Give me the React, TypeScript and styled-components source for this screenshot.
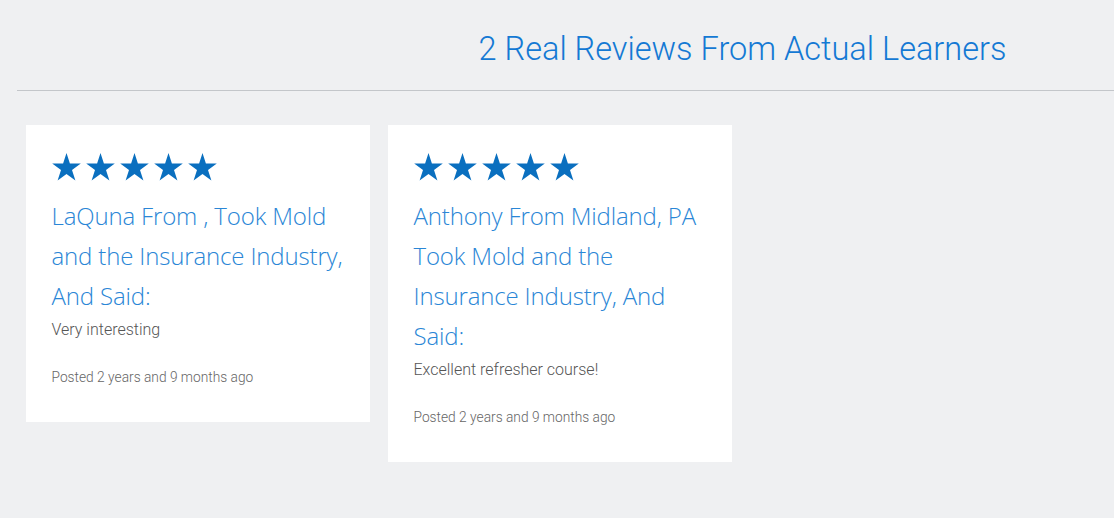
import React from 'react';
import styled, { createGlobalStyle } from 'styled-components';

const GlobalStyle = createGlobalStyle`
  html, body {
    margin: 0;
    padding: 0;
    background: #eff0f2;
    overflow: hidden;
  }
  body {
    font-family: Roboto, "Liberation Sans", sans-serif;
  }
`;

type Review = {
  name: string;
  city: string;
  state: string;
  course: string;
  body: string;
  posted: string;
};

const REVIEWS: Review[] = [
  {
    name: 'LaQuna',
    city: '',
    state: '',
    course: 'Mold and the Insurance Industry',
    body: 'Very interesting',
    posted: '2 years and 9 months ago',
  },
  {
    name: 'Anthony',
    city: 'Midland',
    state: 'PA',
    course: 'Mold and the Insurance Industry',
    body: 'Excellent refresher course!',
    posted: '2 years and 9 months ago',
  },
];

const Star: React.FC = () => (
  <svg width="29" height="28" viewBox="0 0 29 28" aria-hidden="true">
    <polygon
      fill="#0a6fbf"
      points="14.5,0 17.9,10.4 28.8,10.4 20,16.9 23.4,27.5 14.5,21 5.6,27.5 9,16.9 0.2,10.4 11.1,10.4"
    />
  </svg>
);

const ReviewCard: React.FC<{ review: Review }> = ({ review }) => (
  <Card>
    <Stars>
      {[0, 1, 2, 3, 4].map((i) => (
        <Star key={i} />
      ))}
    </Stars>
    <Author>
      {review.name} From {review.city}, {review.state} Took {review.course}, And Said:
    </Author>
    <Body>{review.body}</Body>
    <Posted>Posted {review.posted}</Posted>
  </Card>
);

export const App: React.FC = () => (
  <>
    <GlobalStyle />
    <Section>
      <Header>
        <Title>{REVIEWS.length} Real Reviews From Actual Learners</Title>
      </Header>
      <CardRow>
        {REVIEWS.map((r) => (
          <ReviewCard key={r.name} review={r} />
        ))}
      </CardRow>
    </Section>
  </>
);

const Section = styled.section`
  width: 1451px;
  margin-left: 17px;
  padding-bottom: 40px;
`;

const Header = styled.header`
  border-bottom: 1px solid #c3c6ca;
  padding: 27px 0 19px;
  text-align: center;
`;

const Title = styled.h2`
  margin: 0;
  font-family: Roboto, "Liberation Sans", sans-serif;
  font-weight: 300;
  font-size: 32.5px;
  line-height: 44px;
  color: #1479d4;
`;

const CardRow = styled.div`
  display: flex;
  align-items: flex-start;
  gap: 18px;
  padding: 34px 9px 0;
`;

const Card = styled.article`
  box-sizing: border-box;
  width: 344px;
  background: #ffffff;
  padding: 28px 25px 35px 25.5px;
`;

const Stars = styled.div`
  display: flex;
  gap: 5px;
  height: 28px;
  margin-bottom: 15px;
`;

const Author = styled.h3`
  margin: 0;
  font-family: "Open Sans", "Liberation Sans", sans-serif;
  font-weight: 300;
  font-size: 24px;
  letter-spacing: -0.15px;
  line-height: 40px;
  color: #2a86d6;
`;

const Body = styled.p`
  margin: 3px 0 0;
  font-family: Roboto, "Liberation Sans", sans-serif;
  font-weight: 300;
  font-size: 16px;
  line-height: 22px;
  color: #555555;
`;

const Posted = styled.p`
  margin: 26px 0 0;
  font-family: Roboto, "Liberation Sans", sans-serif;
  font-weight: 300;
  font-size: 13.75px;
  line-height: 20px;
  color: #666666;
`;

export default App;
